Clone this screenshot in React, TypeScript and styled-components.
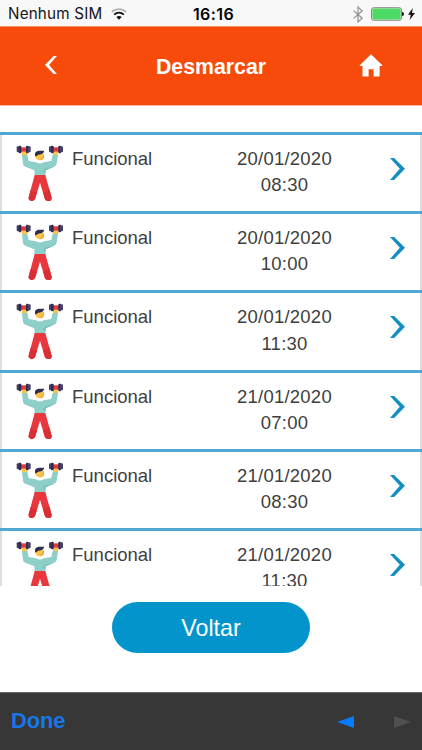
import React from "react";
import styled, { createGlobalStyle } from "styled-components";

const Global = createGlobalStyle`
  * { box-sizing: border-box; }
  body { margin: 0; background: #fff; font-family: "Liberation Sans", Arial, sans-serif; }
  svg { display: block; flex: none; }
`;

const Screen = styled.div`
  width: 422px;
  height: 750px;
  display: flex;
  flex-direction: column;
  overflow: hidden;
  background: #fff;
`;

const StatusBar = styled.div`
  height: 26px;
  flex: none;
  display: grid;
  grid-template-columns: 1fr auto 1fr;
  align-items: center;
  padding: 2px 7px 0 8px;
  background: #f8f8f8;
  font-family: Inter, sans-serif;
  font-size: 15.2px;
  line-height: 24px;
  color: #151515;
`;

const Carrier = styled.div`
  display: flex;
  align-items: center;
  gap: 9px;
  white-space: nowrap;
  letter-spacing: 0.2px;
`;

const Clock = styled.div`
  font-weight: 600;
  font-size: 16px;
  letter-spacing: 0.4px;
  padding-left: 4px;
  color: #000;
`;

const Indicators = styled.div`
  display: flex;
  justify-content: flex-end;
  align-items: center;
  gap: 8px;
`;

const Power = styled.div`
  display: flex;
  align-items: center;
  gap: 4px;
`;

const Header = styled.header`
  height: 80px;
  flex: none;
  display: grid;
  grid-template-columns: 102px 1fr 102px;
  align-items: center;
  background: #f74b0c;
  border-top: 1px solid #f58d68;
  border-bottom: 1px solid #fbb49b;
`;

const HeaderButton = styled.button<{ $nudge?: number }>`
  height: 26px;
  padding: ${({ $nudge = 0 }) => `0 0 ${$nudge}px`};
  border: 0;
  background: none;
  display: flex;
  justify-content: center;
  align-items: center;
`;

const Title = styled.h1`
  margin: 2px 0 0;
  text-align: center;
  font-size: 21.3px;
  line-height: 26px;
  font-weight: 700;
  color: #fff;
`;

const List = styled.ul`
  list-style: none;
  margin: 26px 0 0;
  padding: 0;
  height: 454px;
  flex: none;
  overflow: hidden;
`;

const Row = styled.li`
  height: 79.2px;
  display: grid;
  grid-template-columns: 62px 130px 168px 1fr;
  padding-left: 8px;
  border-top: 3px solid #50a8d2;
  box-shadow: inset 2px 0 #dedede, inset -2px 0 #dedede;
  font-size: 18.5px;
  line-height: 26.2px;
  color: #404040;
`;

const Figure = styled.div`
  padding: 3px 0 0 2px;
`;

const Label = styled.div`
  padding: 11px 0 0 2px;
`;

const When = styled.div`
  padding: 11px 0 0 1px;
  text-align: center;
  letter-spacing: 0.22px;
`;

const Arrow = styled.div`
  padding: 23px 0 0 22px;
`;

const Actions = styled.div`
  flex: 1;
  display: flex;
  justify-content: center;
  align-items: flex-start;
  padding-top: 16px;
`;

const BackButton = styled.button`
  width: 198px;
  height: 51px;
  padding: 2px 0 0;
  border: 0;
  border-radius: 26px;
  background: #0294ca;
  color: #fff;
  font: 23.2px "Liberation Sans", Arial, sans-serif;
`;

const Toolbar = styled.footer`
  height: 58.5px;
  flex: none;
  display: flex;
  justify-content: space-between;
  align-items: center;
  padding: 0 11px;
  background: #373737;
  border-top: 1px solid #686868;
`;

const Done = styled.span`
  font-size: 21.8px;
  font-weight: 700;
  color: #1877e8;
`;

const Pager = styled.div`
  display: flex;
  gap: 40px;
  padding-top: 2px;
`;

const Wifi = () => (
  <svg width="16" height="12" viewBox="0 0 16 12" fill="none" strokeWidth="1.8">
    <path d="M.8 4C4.9.1 11.1.1 15.2 4" stroke="#b5b5b5" />
    <path d="M3.2 6.6c2.8-2.5 6.8-2.5 9.6 0" stroke="#111" />
    <path d="M5.3 9q2.7-2.2 5.4 0L8 11.7z" fill="#111" />
  </svg>
);

const Bluetooth = () => (
  <svg width="10" height="17" viewBox="0 0 10 17" fill="none" stroke="#939393" strokeWidth="1.2">
    <path d="M.6 4.6l8.6 7.6L5 16V1l4.2 3.8-8.6 7.6" />
  </svg>
);

const Battery = () => (
  <svg width="33" height="14" viewBox="0 0 33 14">
    <rect x=".6" y=".8" width="29.8" height="12.4" rx="2" fill="#fff" stroke="#777" />
    <rect x="1.4" y="1.6" width="28.2" height="10.8" rx="1" fill="#4cd964" />
    <path d="M31 5q2 0 2 2t-2 2z" fill="#111" />
  </svg>
);

const Bolt = () => (
  <svg width="7" height="12" viewBox="0 0 7 12">
    <path d="M4.8 0L0 6.7h2.8L1.6 12 7 4.9H4z" fill="#111" />
  </svg>
);

const BackIcon = () => (
  <svg width="12" height="18" viewBox="0 0 12 18">
    <path d="M8.6 0h3.3L4.1 9l7.8 9H8.6L0 9z" fill="#fff" />
  </svg>
);

const HomeIcon = () => (
  <svg width="24" height="23" viewBox="0 0 24 23">
    <path d="M12 .3L.8 11.2q-.6.8.4.8h2.3v10.6h6.1v-7.3h5v7.3h6V12h2.3q1 0 .4-.8z" fill="#fff" />
  </svg>
);

const Chevron = () => (
  <svg width="15" height="22" viewBox="0 0 15 22">
    <path d="M0 0h4.1L15 10.8 4.1 22H0l9.8-11.2z" fill="#128fc1" />
  </svg>
);

const Dumbbell = ({ x }: { x: number }) => (
  <g transform={`translate(${x} 0)`}>
    <rect x="12" y="28" width="18" height="13" fill="#e0393f" />
    <rect x="0" y="25" width="9" height="18" rx="3" fill="#454164" />
    <rect x="6" y="23" width="8" height="23" rx="3" fill="#2e2b4c" />
    <rect x="28" y="23" width="8" height="23" rx="3" fill="#2e2b4c" />
    <rect x="33" y="25" width="9" height="18" rx="3" fill="#454164" />
  </g>
);

const Athlete = () => (
  <svg width="60" height="70" viewBox="0 0 180 210">
    <path d="M35 40h17v15H36zM129 40h16l-1 15h-15z" fill="#fbc34d" />
    <Dumbbell x={20} />
    <Dumbbell x={117} />
    <path d="M36 52l16-1 4 18 22 4q12 7 23 0l23-4 4-18h16l-4 26q-2 7-8 9l-25 11-1 18H74l-1-18-27-11q-6-2-7-8z" fill="#8ecfca" />
    <path d="M132 86l-25 11-1 10-8-7 8-9z" fill="#79c1bd" />
    <path d="M77 48h25v7q0 12-12 12-13 0-13-12z" fill="#fbc449" />
    <path d="M100 47q5 8 1 14-5 7-13 5 9-4 12-19z" fill="#f5a543" />
    <path d="M76 56q-5-16 10-18h16q1 10-17 12z" fill="#2f2c4c" />
    <path d="M74 111h32l19 68q1 10-10 10-9 0-11-8L90 134l-14 47q-3 9-11 8-11-1-9-11z" fill="#e9383d" />
    <path d="M62 156q6 7 19 7l-5 18q-3 9-11 8-11-1-9-11zM99 163q14-2 19-9l7 25q1 10-10 10-9 0-11-8z" fill="#d92e34" />
  </svg>
);

const Triangle = ({ forward = false }: { forward?: boolean }) => (
  <svg width="17" height="12" viewBox="0 0 17 12">
    <path d={forward ? "M0 0l17 6-17 6z" : "M17 0L0 6l17 6z"} fill={forward ? "#505050" : "#087bfb"} />
  </svg>
);

const classes = [
  ["20/01/2020", "08:30"],
  ["20/01/2020", "10:00"],
  ["20/01/2020", "11:30"],
  ["21/01/2020", "07:00"],
  ["21/01/2020", "08:30"],
  ["21/01/2020", "11:30"],
];

export default function App() {
  return (
    <Screen>
      <Global />
      <StatusBar>
        <Carrier>Nenhum SIM<Wifi /></Carrier>
        <Clock>16:16</Clock>
        <Indicators>
          <Bluetooth />
          <Power><Battery /><Bolt /></Power>
        </Indicators>
      </StatusBar>
      <Header>
        <HeaderButton $nudge={2} aria-label="Voltar"><BackIcon /></HeaderButton>
        <Title>Desmarcar</Title>
        <HeaderButton $nudge={2} aria-label="Início"><HomeIcon /></HeaderButton>
      </Header>
      <List>
        {classes.map(([date, time]) => (
          <Row key={date + time}>
            <Figure><Athlete /></Figure>
            <Label>Funcional</Label>
            <When>{date}<br />{time}</When>
            <Arrow><Chevron /></Arrow>
          </Row>
        ))}
      </List>
      <Actions><BackButton>Voltar</BackButton></Actions>
      <Toolbar>
        <Done>Done</Done>
        <Pager><Triangle /><Triangle forward /></Pager>
      </Toolbar>
    </Screen>
  );
}
